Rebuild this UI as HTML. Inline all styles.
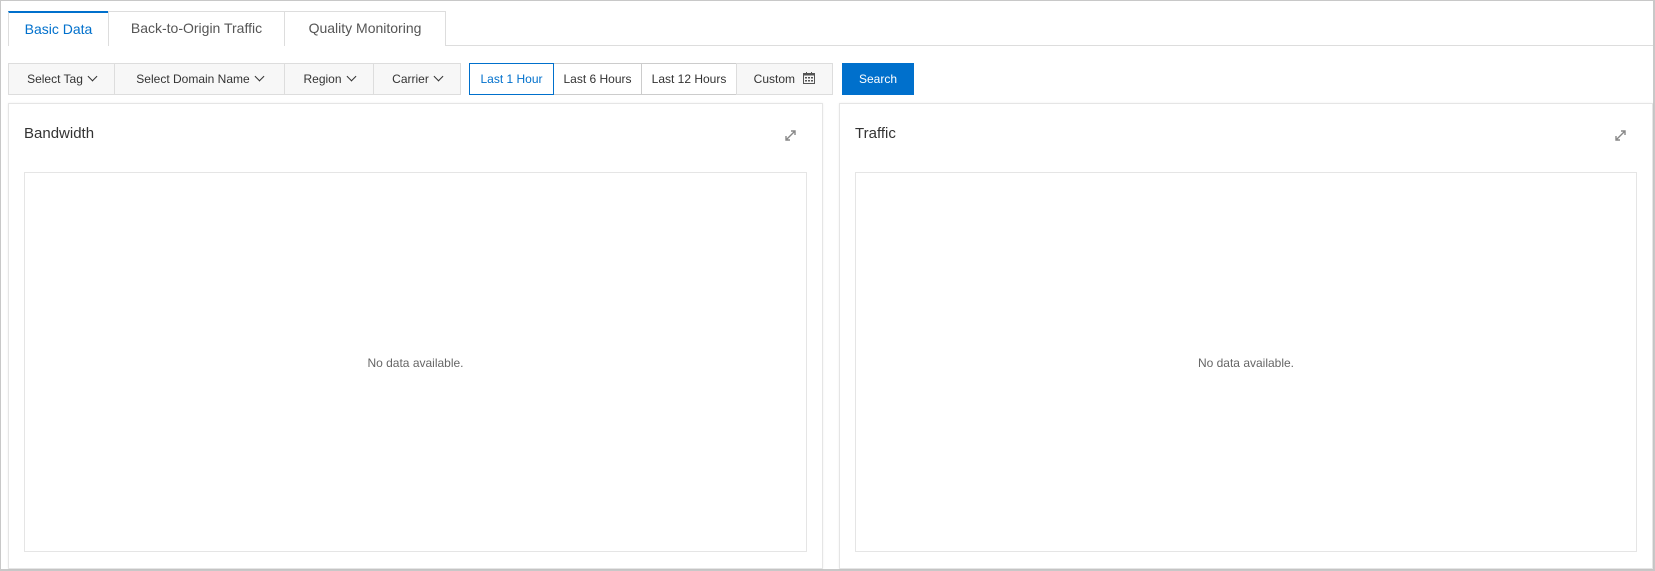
<!DOCTYPE html><html><head><style>
*{box-sizing:border-box;margin:0;padding:0}
body{width:1655px;height:571px;background:#fff;font-family:"Liberation Sans",sans-serif;position:relative;overflow:hidden}
.frame{position:absolute;left:0;top:0;width:1655px;height:571px;border:1px solid #c8c8c8;border-right:2px solid #c8c8c8;border-bottom:2px solid #c8c8c8}
.abs{position:absolute}
.tabline{left:8px;top:45px;width:1645px;height:1px;background:#ddd}
.tab{top:11px;height:35px;border:1px solid #ddd;border-bottom:none;font-size:14px;color:#555;text-align:center;line-height:33px;background:#fff}
.f{top:63px;height:32px;border:1px solid #ddd;background:#f7f7f7;font-size:12px;color:#333;text-align:center;line-height:30px}
.chev{display:inline-block;width:7px;height:7px;border-right:1.5px solid #333;border-bottom:1.5px solid #333;transform:rotate(45deg);margin-left:6px;position:relative;top:-3px}
.card{top:103px;height:466px;border:1px solid #e5e5e5;box-shadow:0 0 2px rgba(0,0,0,.06)}
.title{font-size:15px;color:#333;position:absolute;left:15px;top:21px}
.inner{position:absolute;left:15px;top:68px;right:15px;bottom:16px;border:1px solid #e5e5e5}
.nd{position:absolute;width:100%;top:183px;text-align:center;font-size:12px;color:#666}
.ex{position:absolute;right:26px;top:26px}
</style></head><body>
<div class="frame"></div>
<div class="abs tabline"></div>
<div class="abs tab" style="left:8px;width:101px;border-top:2px solid #0070cc;color:#0070cc;height:35px">Basic Data</div>
<div class="abs tab" style="left:108px;width:177px">Back-to-Origin Traffic</div>
<div class="abs tab" style="left:284px;width:162px">Quality Monitoring</div>

<div class="abs f" style="left:8px;width:107px">Select Tag<span class="chev"></span></div>
<div class="abs f" style="left:114px;width:171px">Select Domain Name<span class="chev"></span></div>
<div class="abs f" style="left:284px;width:90px">Region<span class="chev"></span></div>
<div class="abs f" style="left:373px;width:88px">Carrier<span class="chev"></span></div>

<div class="abs f" style="left:469px;width:85px;background:#fff;border-color:#0070cc;color:#0070cc;z-index:2">Last 1 Hour</div>
<div class="abs f" style="left:553px;width:89px;background:#fff;border-color:#ccc">Last 6 Hours</div>
<div class="abs f" style="left:641px;width:96px;background:#fff;border-color:#ccc">Last 12 Hours</div>
<div class="abs f" style="left:736px;width:97px">Custom <svg width="12" height="12" viewBox="0 0 12 12" style="margin-left:5px;vertical-align:-1px"><rect x="0.5" y="1.5" width="11" height="10" fill="none" stroke="#555"/><rect x="0.5" y="1.5" width="11" height="2" fill="#555"/><rect x="3" y="0" width="1" height="2" fill="#555"/><rect x="8" y="0" width="1" height="2" fill="#555"/><g fill="#555"><rect x="2" y="5" width="2" height="1.5"/><rect x="5" y="5" width="2" height="1.5"/><rect x="8" y="5" width="2" height="1.5"/><rect x="2" y="8" width="2" height="1.5"/><rect x="5" y="8" width="2" height="1.5"/><rect x="8" y="8" width="2" height="1.5"/></g></svg></div>
<div class="abs" style="left:842px;top:63px;width:72px;height:32px;background:#0070cc;color:#fff;font-size:12px;text-align:center;line-height:32px">Search</div>

<div class="abs card" style="left:8px;width:815px"><div class="title">Bandwidth</div>
<svg class="ex" width="11" height="11" viewBox="0 0 11 11"><path d="M1 10L10 1M6 1h4v4M1 6v4h4" fill="none" stroke="#888" stroke-width="1.4"/></svg>
<div class="inner"><div class="nd">No data available.</div></div></div>
<div class="abs card" style="left:839px;width:814px"><div class="title">Traffic</div>
<svg class="ex" width="11" height="11" viewBox="0 0 11 11"><path d="M1 10L10 1M6 1h4v4M1 6v4h4" fill="none" stroke="#888" stroke-width="1.4"/></svg>
<div class="inner"><div class="nd">No data available.</div></div></div>
</body></html>
